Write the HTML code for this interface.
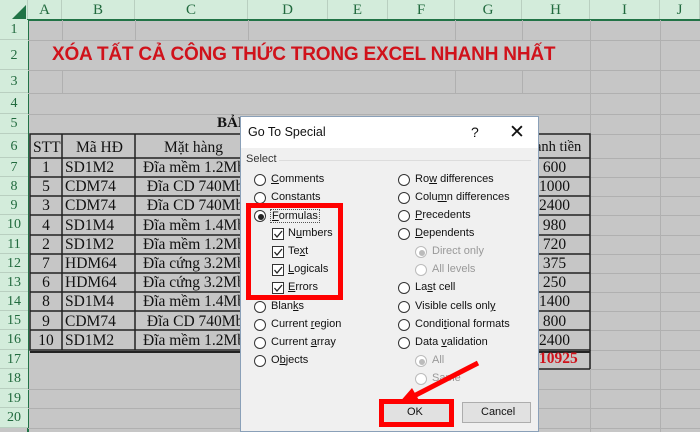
<!DOCTYPE html>
<html><head><meta charset="utf-8"><style>
*{margin:0;padding:0;box-sizing:border-box}
body{width:700px;height:432px;overflow:hidden;background:#c6c6c6;position:relative;font-family:"Liberation Serif",serif}
.a{position:absolute}
.ch{top:0;height:20px;background:#d3ecdb;border-right:1px solid #b9cfc0;color:#216a3e;font-size:15px;text-align:center;line-height:21px}
.rh{left:0;width:28px;background:#d3ecdb;border-bottom:1px solid #b9cfc0;color:#216a3e;font-size:14px;text-align:center}
.vl{top:20px;bottom:0;width:1px;background:#b0b0b0}
.hl{left:28px;right:0;height:1px;background:#b0b0b0}
.c{font-size:15.5px;color:#111;white-space:nowrap}
.d{font-family:"Liberation Sans",sans-serif;font-size:11px;color:#111;white-space:nowrap}
.r{width:12px;height:12px;border:1px solid #333;border-radius:50%;background:#fff}
.k{width:12px;height:12px;border:1px solid #333;background:#fff}
</style></head><body>
<div class="a ch" style="left:0;width:28px;background:#d3ecdb"></div>
<svg class="a" style="left:12px;top:5px" width="14" height="14"><polygon points="14,0 14,14 0,14" fill="#217346"/></svg>
<div class="a ch" style="left:28px;width:34px">A</div>
<div class="a ch" style="left:62px;width:73px">B</div>
<div class="a ch" style="left:135px;width:113px">C</div>
<div class="a ch" style="left:248px;width:80px">D</div>
<div class="a ch" style="left:328px;width:60px">E</div>
<div class="a ch" style="left:388px;width:67px">F</div>
<div class="a ch" style="left:455px;width:67px">G</div>
<div class="a ch" style="left:522px;width:68px">H</div>
<div class="a ch" style="left:590px;width:70px">I</div>
<div class="a ch" style="left:660px;width:40px">J</div>
<div class="a" style="left:28px;top:19px;width:672px;height:2px;background:#217346"></div>
<div class="a" style="left:27px;top:19px;width:2px;height:413px;background:#217346"></div>
<div class="a rh" style="top:20px;height:20px;line-height:20px">1</div>
<div class="a rh" style="top:40px;height:30px;line-height:32px">2</div>
<div class="a rh" style="top:70px;height:23px;line-height:23px">3</div>
<div class="a rh" style="top:93px;height:21px;line-height:21px">4</div>
<div class="a rh" style="top:114px;height:20px;line-height:20px">5</div>
<div class="a rh" style="top:134px;height:24px;line-height:26px">6</div>
<div class="a rh" style="top:158px;height:19px;line-height:19px">7</div>
<div class="a rh" style="top:177px;height:19px;line-height:19px">8</div>
<div class="a rh" style="top:196px;height:19px;line-height:19px">9</div>
<div class="a rh" style="top:215px;height:20px;line-height:20px">10</div>
<div class="a rh" style="top:235px;height:19px;line-height:19px">11</div>
<div class="a rh" style="top:254px;height:19px;line-height:19px">12</div>
<div class="a rh" style="top:273px;height:19px;line-height:19px">13</div>
<div class="a rh" style="top:292px;height:19px;line-height:19px">14</div>
<div class="a rh" style="top:311px;height:19px;line-height:19px">15</div>
<div class="a rh" style="top:330px;height:20px;line-height:20px">16</div>
<div class="a rh" style="top:350px;height:19px;line-height:19px">17</div>
<div class="a rh" style="top:369px;height:20px;line-height:20px">18</div>
<div class="a rh" style="top:389px;height:19px;line-height:19px">19</div>
<div class="a rh" style="top:408px;height:20px;line-height:20px">20</div>
<div class="a vl" style="left:62px;top:20px;height:20px"></div>
<div class="a vl" style="left:62px;top:70px;height:23px"></div>
<div class="a vl" style="left:135px;top:20px;height:20px"></div>
<div class="a vl" style="left:248px;top:20px;height:20px"></div>
<div class="a vl" style="left:455px;top:20px;height:20px"></div>
<div class="a vl" style="left:455px;top:70px;height:23px"></div>
<div class="a vl" style="left:522px;top:20px;height:20px"></div>
<div class="a vl" style="left:522px;top:70px;height:23px"></div>
<div class="a vl" style="left:590px"></div>
<div class="a vl" style="left:660px"></div>
<div class="a hl" style="top:40px"></div><div class="a hl" style="top:70px"></div><div class="a hl" style="top:93px"></div><div class="a hl" style="top:114px"></div>
<div class="a hl" style="top:134px;left:590px"></div>
<div class="a hl" style="top:158px;left:590px"></div><div class="a hl" style="top:177px;left:590px"></div><div class="a hl" style="top:196px;left:590px"></div><div class="a hl" style="top:215px;left:590px"></div><div class="a hl" style="top:235px;left:590px"></div><div class="a hl" style="top:254px;left:590px"></div><div class="a hl" style="top:273px;left:590px"></div><div class="a hl" style="top:292px;left:590px"></div><div class="a hl" style="top:311px;left:590px"></div><div class="a hl" style="top:330px;left:590px"></div><div class="a hl" style="top:350px;left:590px"></div><div class="a hl" style="top:369px;left:590px"></div>
<div class="a hl" style="top:389px"></div><div class="a hl" style="top:408px"></div><div class="a hl" style="top:428px"></div>
<div class="a" style="left:52px;top:44px;font-family:'Liberation Sans',sans-serif;font-weight:bold;font-size:19px;color:#d0121b;white-space:nowrap;letter-spacing:-0.2px">XÓA TẤT CẢ CÔNG THỨC TRONG EXCEL NHANH NHẤT</div>
<div class="a c" style="left:217px;top:115px;font-weight:bold;font-size:15px">BẢNG</div>
<svg class="a" style="left:0;top:0" width="700" height="432">
<g stroke="#222" stroke-width="1.5" fill="none">
<rect x="30" y="134" width="560" height="216"/>
<line x1="62" y1="134" x2="62" y2="350"/><line x1="135" y1="134" x2="135" y2="350"/><line x1="522" y1="134" x2="522" y2="369"/><line x1="590" y1="350" x2="590" y2="369"/>
<line x1="30" y1="158" x2="590" y2="158"/><line x1="30" y1="177" x2="590" y2="177"/><line x1="30" y1="196" x2="590" y2="196"/><line x1="30" y1="215" x2="590" y2="215"/><line x1="30" y1="235" x2="590" y2="235"/><line x1="30" y1="254" x2="590" y2="254"/><line x1="30" y1="273" x2="590" y2="273"/><line x1="30" y1="292" x2="590" y2="292"/><line x1="30" y1="311" x2="590" y2="311"/><line x1="30" y1="330" x2="590" y2="330"/>
<line x1="30" y1="352" x2="590" y2="352" stroke-width="2"/><line x1="522" y1="369" x2="590" y2="369"/>
</g></svg>
<div class="a c" style="left:33px;top:139px">STT</div>
<div class="a c" style="left:76px;top:139px">Mã HĐ</div>
<div class="a c" style="left:164px;top:139px">Mặt hàng</div>
<div class="a c" style="left:535px;top:139px;font-size:14.5px">ành tiền</div>
<div class="a" style="left:30px;top:158px;width:32px;text-align:center;font-size:15.5px;line-height:19.2px;color:#111">1<br>5<br>3<br>4<br>2<br>7<br>6<br>8<br>9<br>10</div>
<div class="a c" style="left:65px;top:158px;line-height:19.2px">SD1M2<br>CDM74<br>CDM74<br>SD1M4<br>SD1M2<br>HDM64<br>HDM64<br>SD1M4<br>CDM74<br>SD1M2</div>
<div class="a c" style="left:143px;top:158px;line-height:19.2px">Đĩa mềm 1.2Mb<br>&nbsp;Đĩa CD 740Mb<br>&nbsp;Đĩa CD 740Mb<br>Đĩa mềm 1.4Mb<br>Đĩa mềm 1.2Mb<br>Đĩa cứng 3.2Mb<br>Đĩa cứng 3.2Mb<br>Đĩa mềm 1.4Mb<br>&nbsp;Đĩa CD 740Mb<br>Đĩa mềm 1.2Mb</div>
<div class="a c" style="left:539px;top:158px;line-height:19.2px">&nbsp;600<br>1000<br>2400<br>&nbsp;980<br>&nbsp;720<br>&nbsp;375<br>&nbsp;250<br>1400<br>&nbsp;800<br>2400</div>
<div class="a c" style="left:539px;top:350px;color:#d0121b;font-weight:bold">10925</div>
<div class="a" style="left:240px;top:116px;width:299px;height:316px;background:#f0f0f0;border:1px solid #8aa0b8">
<div class="a" style="left:0;top:0;width:297px;height:31px;background:#fff"></div>
<div class="a d" style="left:7px;top:8px;font-size:12.5px">Go To Special</div>
<div class="a d" style="left:230px;top:7px;font-size:14px">?</div>
<div class="a d" style="left:268px;top:4px;font-size:19px;font-weight:300">✕</div>
<div class="a d" style="left:5px;top:36px;color:#333">Select</div>
<div class="a" style="left:38px;top:43px;width:252px;height:1px;background:#dcdcdc"></div>
</div>
<div class="a r" style="left:254px;top:174px"></div><div class="a d" style="left:271px;top:173px"><u>C</u>omments</div>
<div class="a r" style="left:254px;top:192px"></div><div class="a d" style="left:271px;top:191px">Constants</div>
<div class="a r" style="left:254px;top:210px"></div><div class="a" style="left:258px;top:214px;width:6px;height:6px;border-radius:50%;background:#222"></div><div class="a d" style="left:270px;top:209px;border:1px dotted #555;padding:0 1px"><u>F</u>ormulas</div>
<div class="a k" style="left:272px;top:228px"></div><div class="a d" style="left:288px;top:227px">N<u>u</u>mbers</div>
<div class="a k" style="left:272px;top:246px"></div><div class="a d" style="left:288px;top:245px">Te<u>x</u>t</div>
<div class="a k" style="left:272px;top:264px"></div><div class="a d" style="left:288px;top:263px"><u>L</u>ogicals</div>
<div class="a k" style="left:272px;top:282px"></div><div class="a d" style="left:288px;top:281px"><u>E</u>rrors</div>
<svg class="a" style="left:272px;top:228px" width="12" height="70"><g stroke="#222" stroke-width="1.3" fill="none"><path d="M2.5 6l2.5 3 5-6"/><path d="M2.5 24l2.5 3 5-6"/><path d="M2.5 42l2.5 3 5-6"/><path d="M2.5 60l2.5 3 5-6"/></g></svg>
<div class="a r" style="left:254px;top:301px"></div><div class="a d" style="left:271px;top:300px">Blan<u>k</u>s</div>
<div class="a r" style="left:254px;top:319px"></div><div class="a d" style="left:271px;top:318px">Current <u>r</u>egion</div>
<div class="a r" style="left:254px;top:337px"></div><div class="a d" style="left:271px;top:336px">Current <u>a</u>rray</div>
<div class="a r" style="left:254px;top:355px"></div><div class="a d" style="left:271px;top:354px">O<u>b</u>jects</div>
<div class="a r" style="left:398px;top:174px"></div><div class="a d" style="left:415px;top:173px">Ro<u>w</u> differences</div>
<div class="a r" style="left:398px;top:192px"></div><div class="a d" style="left:415px;top:191px">Colu<u>m</u>n differences</div>
<div class="a r" style="left:398px;top:210px"></div><div class="a d" style="left:415px;top:209px"><u>P</u>recedents</div>
<div class="a r" style="left:398px;top:228px"></div><div class="a d" style="left:415px;top:227px"><u>D</u>ependents</div>
<div class="a r" style="left:415px;top:246px;border-color:#bbb"></div><div class="a" style="left:419px;top:250px;width:6px;height:6px;border-radius:50%;background:#bbb"></div><div class="a d" style="left:432px;top:245px;color:#999">Direct only</div>
<div class="a r" style="left:415px;top:264px;border-color:#bbb"></div><div class="a d" style="left:432px;top:263px;color:#999">All levels</div>
<div class="a r" style="left:398px;top:282px"></div><div class="a d" style="left:415px;top:281px">La<u>s</u>t cell</div>
<div class="a r" style="left:398px;top:301px"></div><div class="a d" style="left:415px;top:300px">Visible cells onl<u>y</u></div>
<div class="a r" style="left:398px;top:319px"></div><div class="a d" style="left:415px;top:318px">Condi<u>t</u>ional formats</div>
<div class="a r" style="left:398px;top:337px"></div><div class="a d" style="left:415px;top:336px">Data <u>v</u>alidation</div>
<div class="a r" style="left:415px;top:355px;border-color:#bbb"></div><div class="a" style="left:419px;top:359px;width:6px;height:6px;border-radius:50%;background:#bbb"></div><div class="a d" style="left:432px;top:354px;color:#999">All</div>
<div class="a r" style="left:415px;top:373px;border-color:#bbb"></div><div class="a d" style="left:432px;top:372px;color:#999">Same</div>
<div class="a" style="left:383px;top:402px;width:68px;height:21px;background:#e1e1e1;border:1px solid #adadad"></div>
<div class="a d" style="left:407px;top:406px">OK</div>
<div class="a" style="left:462px;top:402px;width:69px;height:21px;background:#e1e1e1;border:1px solid #adadad"></div>
<div class="a d" style="left:481px;top:406px">Cancel</div>
<div class="a" style="left:246px;top:203px;width:97px;height:97px;border:5px solid #f00"></div>
<div class="a" style="left:379px;top:399px;width:75px;height:28px;border:5px solid #f00"></div>
<svg class="a" style="left:0;top:0" width="700" height="432"><line x1="478" y1="363" x2="410" y2="398" stroke="#f00" stroke-width="5"/><polygon points="398,404 412,388 420,402" fill="#f00"/></svg>
</body></html>
